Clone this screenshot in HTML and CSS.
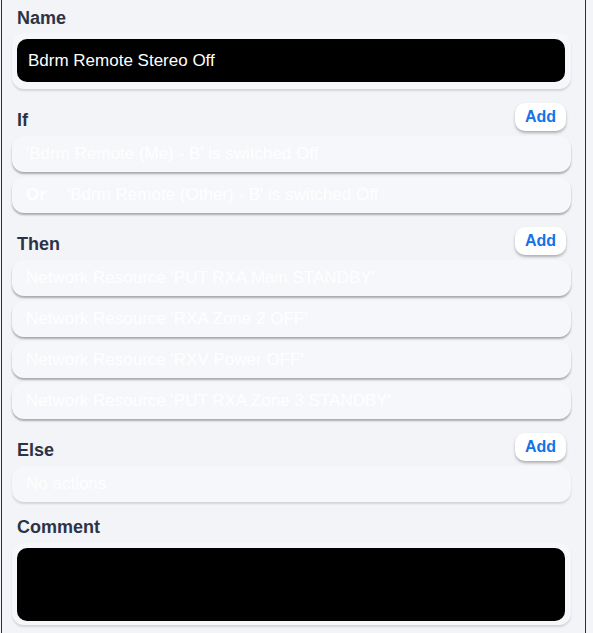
FILE: index.html
```html
<!DOCTYPE html>
<html>
<head>
<meta charset="utf-8">
<link rel="stylesheet" href="styles.css">
</head>
<body>
<div class="panel">
  <section class="section first">
    <div class="header"><h2 class="label">Name</h2></div>
    <div class="card field-card">
      <div class="input">Bdrm Remote Stereo Off</div>
    </div>
  </section>

  <section class="section">
    <div class="header"><h2 class="label">If</h2><button class="add">Add</button></div>
    <div class="list">
      <div class="row">'Bdrm Remote (Me) - B' is switched Off</div>
      <div class="row"><span class="or">Or</span>'Bdrm Remote (Other) - B' is switched Off</div>
    </div>
  </section>

  <section class="section">
    <div class="header"><h2 class="label">Then</h2><button class="add">Add</button></div>
    <div class="list">
      <div class="row">Network Resource 'PUT RXA Main STANDBY'</div>
      <div class="row">Network Resource 'RXA Zone 2 OFF'</div>
      <div class="row">Network Resource 'RXV Power OFF'</div>
      <div class="row">Network Resource 'PUT RXA Zone 3 STANDBY'</div>
    </div>
  </section>

  <section class="section">
    <div class="header"><h2 class="label">Else</h2><button class="add">Add</button></div>
    <div class="list">
      <div class="row light">No actions</div>
    </div>
  </section>

  <section class="section">
    <div class="header"><h2 class="label">Comment</h2></div>
    <div class="card field-card comment-card">
      <div class="input textarea"></div>
    </div>
  </section>
</div>
</body>
</html>
```

FILE: styles.css
```css
html, body {
  margin: 0;
  padding: 0;
  background: #f3f4f8;
  font-family: "Liberation Sans", Arial, sans-serif;
}

.panel {
  margin-left: 1px;
  min-height: 633px;
  box-sizing: border-box;
  width: 585px;
  border-left: 1px solid #2b303b;
  border-right: 1px solid #2b303b;
  padding: 0 14px 0 10px;
  background: #f3f4f8;
}

.section {
  margin-top: 14px;
}

.section.first {
  margin-top: 0;
  padding-top: 7px;
}

.header {
  display: flex;
  justify-content: space-between;
  align-items: flex-end;
  padding: 0 5px 0 5px;
}

.label {
  margin: 0;
  font-size: 18px;
  line-height: 22px;
  font-weight: bold;
  color: #2c3346;
}

.add {
  width: 51px;
  height: 28px;
  border: none;
  border-radius: 10px;
  background: #ffffff;
  color: #1672e6;
  font-family: "Liberation Sans", Arial, sans-serif;
  font-weight: bold;
  font-size: 16px;
  padding: 0;
  box-shadow: 0 2px 3px rgba(0, 0, 0, 0.28);
}

.first .header + .card {
  margin-top: 4px;
}

.card {
  margin-top: 5px;
  background: #f6f7fa;
  border-radius: 12px;
  box-shadow: 0 2px 2px rgba(0, 0, 0, 0.13);
}

.field-card {
  padding: 6px 6px 7px 5px;
}

.comment-card {
  padding: 5px 6px 4px 5px;
}

.input {
  height: 43px;
  background: #000000;
  border-radius: 10px;
  color: #ffffff;
  font-size: 17px;
  line-height: 43px;
  padding-left: 11px;
}

.textarea {
  height: 73px;
}

.list {
  margin-top: 5px;
  display: flex;
  flex-direction: column;
  gap: 5px;
}

.row {
  height: 36px;
  line-height: 35px;
  box-sizing: border-box;
  padding-left: 14px;
  background: #f6f7fa;
  border-radius: 12px;
  color: rgba(255, 255, 255, 0.95);
  font-size: 17px;
  box-shadow: 0 2px 2px rgba(0, 0, 0, 0.3);
  white-space: nowrap;
}

.row.light {
  box-shadow: 0 2px 2px rgba(0, 0, 0, 0.13);
}

.or {
  font-weight: bold;
  display: inline-block;
  width: 41px;
}
```
